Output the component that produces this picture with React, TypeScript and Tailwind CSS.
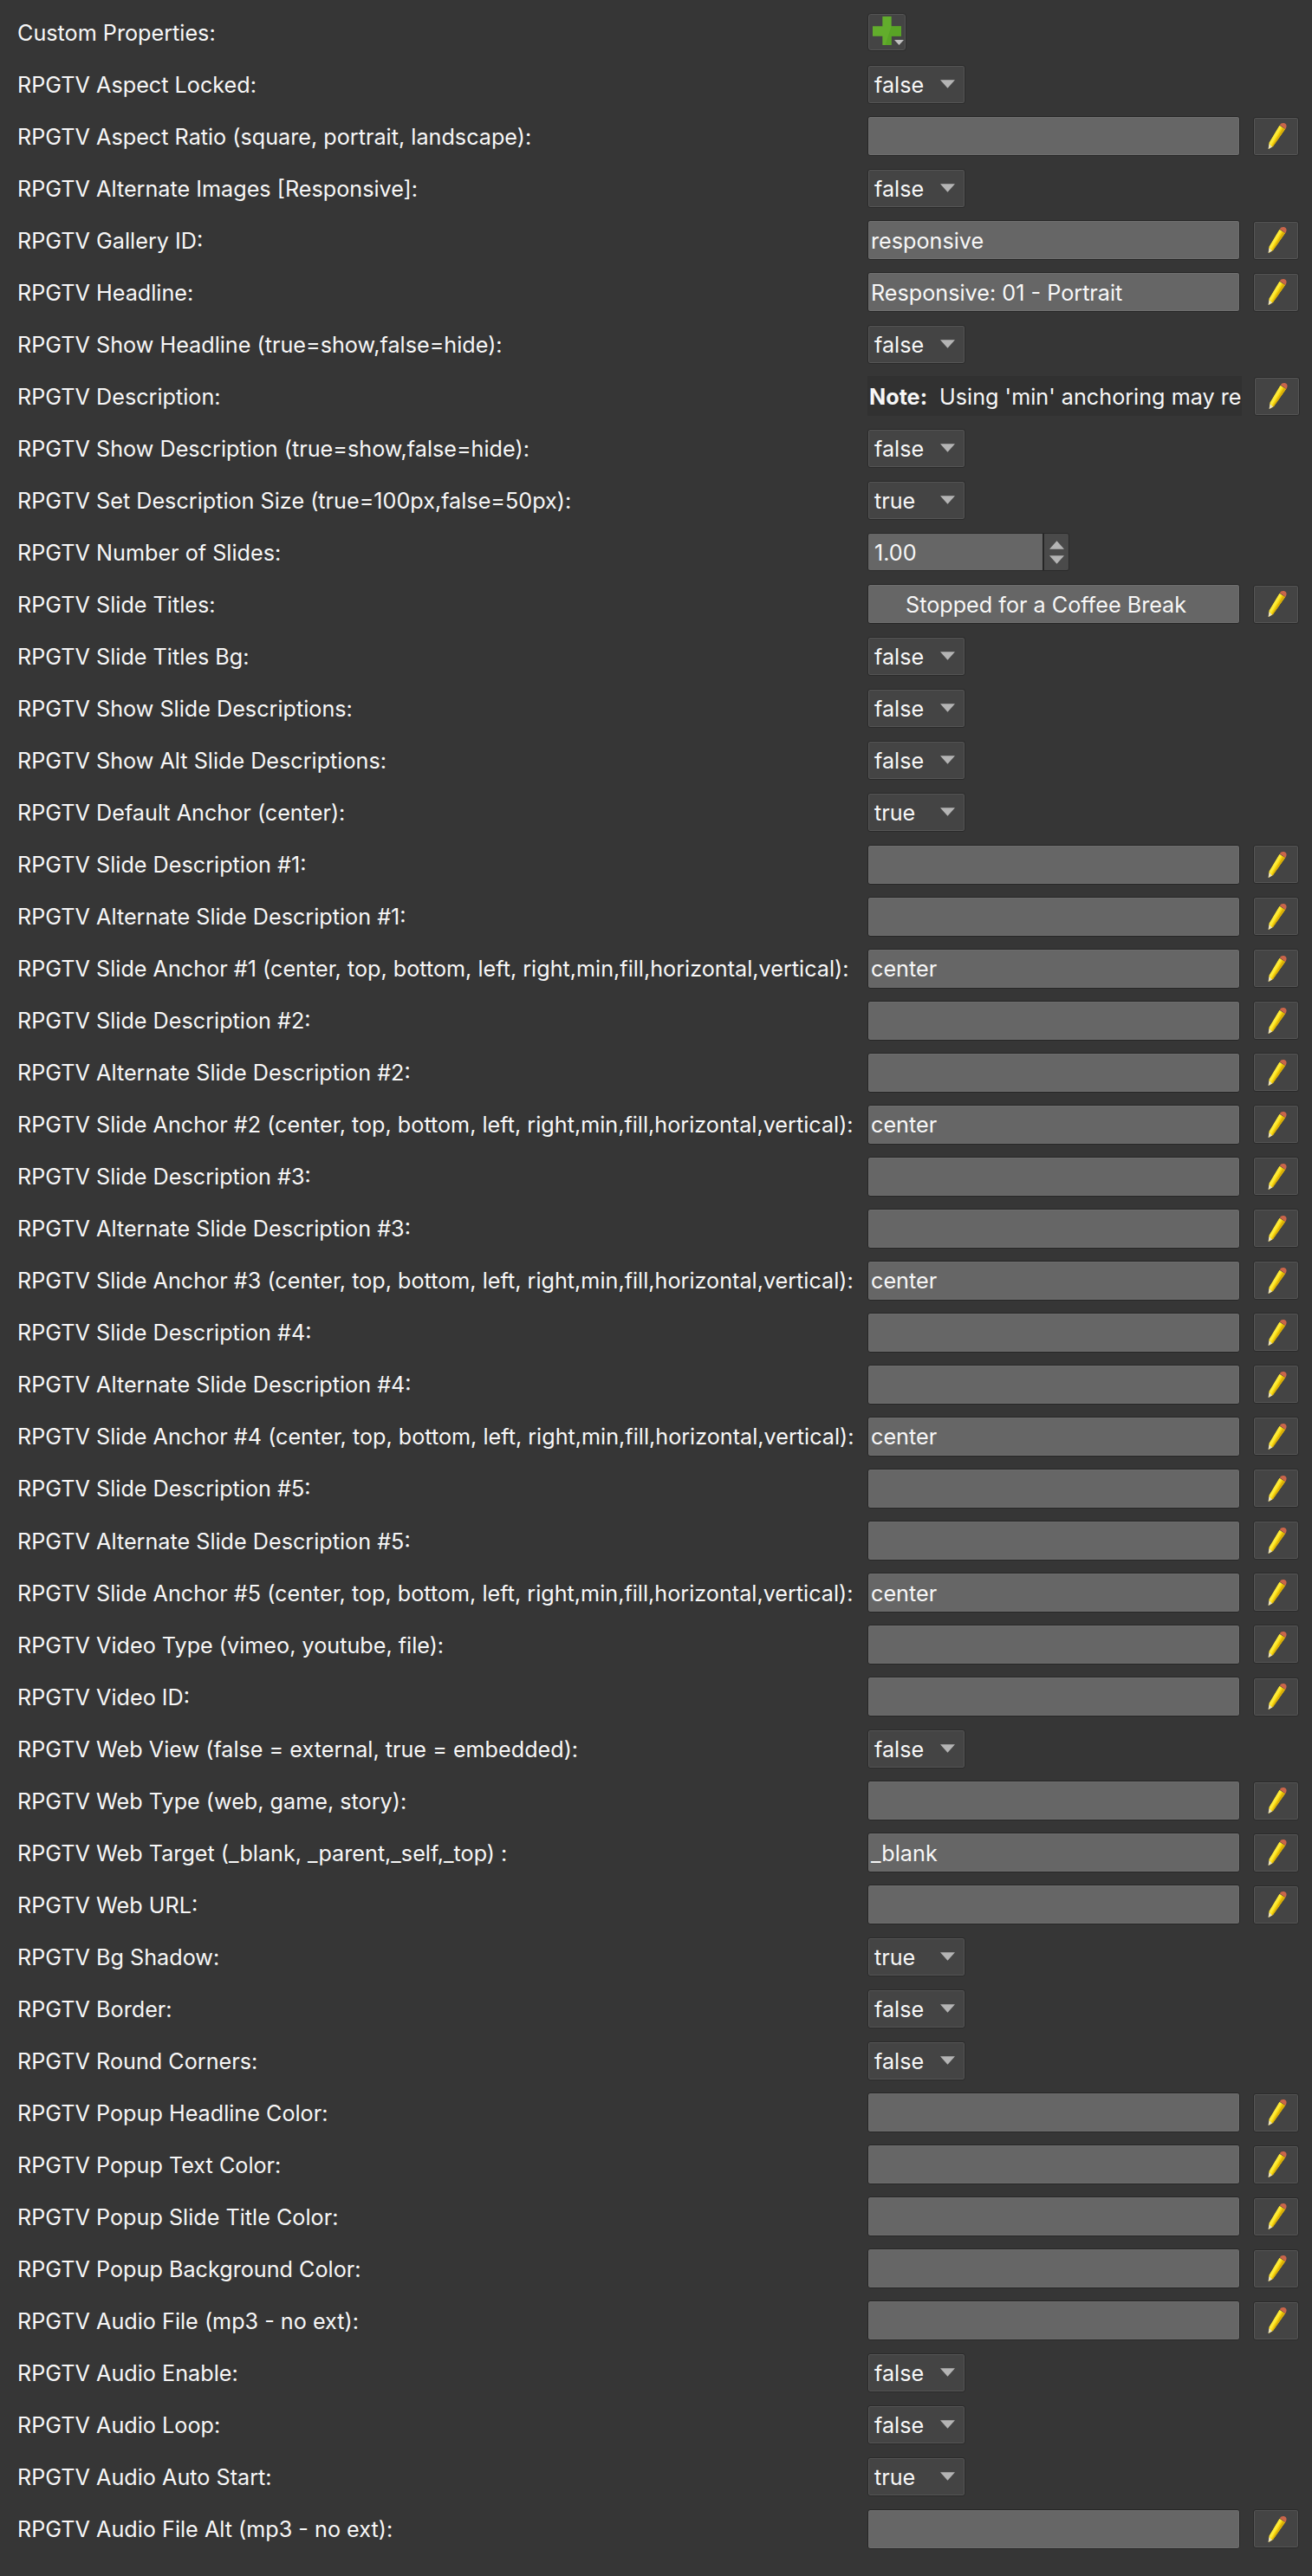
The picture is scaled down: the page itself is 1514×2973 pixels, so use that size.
type RowKind =
	| { kind: "add" }
	| { kind: "select"; value: string }
	| { kind: "text"; value?: string; centered?: boolean }
	| { kind: "note" }
	| { kind: "number"; value: string };

const anchor = "(center, top, bottom, left, right,min,fill,horizontal,vertical):";

const slideRows = (n: number): [string, RowKind][] => [
	[`RPGTV Slide Description #${n}:`, { kind: "text" }],
	[`RPGTV Alternate Slide Description #${n}:`, { kind: "text" }],
	[`RPGTV Slide Anchor #${n} ${anchor}`, { kind: "text", value: "center" }],
];

const rows: [string, RowKind][] = [
	["Custom Properties:", { kind: "add" }],
	["RPGTV Aspect Locked:", { kind: "select", value: "false" }],
	["RPGTV Aspect Ratio (square, portrait, landscape):", { kind: "text" }],
	["RPGTV Alternate Images [Responsive]:", { kind: "select", value: "false" }],
	["RPGTV Gallery ID:", { kind: "text", value: "responsive" }],
	["RPGTV Headline:", { kind: "text", value: "Responsive: 01 - Portrait" }],
	["RPGTV Show Headline (true=show,false=hide):", { kind: "select", value: "false" }],
	["RPGTV Description:", { kind: "note" }],
	["RPGTV Show Description (true=show,false=hide):", { kind: "select", value: "false" }],
	["RPGTV Set Description Size (true=100px,false=50px):", { kind: "select", value: "true" }],
	["RPGTV Number of Slides:", { kind: "number", value: "1.00" }],
	["RPGTV Slide Titles:", { kind: "text", value: "Stopped for a Coffee Break", centered: true }],
	["RPGTV Slide Titles Bg:", { kind: "select", value: "false" }],
	["RPGTV Show Slide Descriptions:", { kind: "select", value: "false" }],
	["RPGTV Show Alt Slide Descriptions:", { kind: "select", value: "false" }],
	["RPGTV Default Anchor (center):", { kind: "select", value: "true" }],
	...slideRows(1),
	...slideRows(2),
	...slideRows(3),
	...slideRows(4),
	...slideRows(5),
	["RPGTV Video Type (vimeo, youtube, file):", { kind: "text" }],
	["RPGTV Video ID:", { kind: "text" }],
	["RPGTV Web View (false = external, true = embedded):", { kind: "select", value: "false" }],
	["RPGTV Web Type (web, game, story):", { kind: "text" }],
	["RPGTV Web Target (_blank, _parent,_self,_top) :", { kind: "text", value: "_blank" }],
	["RPGTV Web URL:", { kind: "text" }],
	["RPGTV Bg Shadow:", { kind: "select", value: "true" }],
	["RPGTV Border:", { kind: "select", value: "false" }],
	["RPGTV Round Corners:", { kind: "select", value: "false" }],
	["RPGTV Popup Headline Color:", { kind: "text" }],
	["RPGTV Popup Text Color:", { kind: "text" }],
	["RPGTV Popup Slide Title Color:", { kind: "text" }],
	["RPGTV Popup Background Color:", { kind: "text" }],
	["RPGTV Audio File (mp3 - no ext):", { kind: "text" }],
	["RPGTV Audio Enable:", { kind: "select", value: "false" }],
	["RPGTV Audio Loop:", { kind: "select", value: "false" }],
	["RPGTV Audio Auto Start:", { kind: "select", value: "true" }],
	["RPGTV Audio File Alt (mp3 - no ext):", { kind: "text" }],
];

const Caret = ({ up = false }: { up?: boolean }) => (
	<svg width="17" height="10" viewBox="0 0 16 9" className="block">
		<polygon points={up ? "8,0 16,9 0,9" : "0,0 16,0 8,9"} fill="#b4b4b4" />
	</svg>
);

const Pencil = () => (
	<svg width="24" height="32" viewBox="0 0 24 32">
		{/* body */}
		<polygon points="15.5,4 22,8 8,28 3,31 3.5,24" fill="#f7d60f" />
		<polygon points="15.5,4 18,5.5 5.5,27 3.5,24" fill="#fdeb3a" />
		<polygon points="19.5,6.5 22,8 8,28 6.5,28.5" fill="#d9ae08" />
		{/* tip */}
		<polygon points="3.5,25 7,28.5 2.5,31" fill="#e8dfc0" />
		{/* eraser */}
		<path d="M16 3.5 C17 0.5 21 0.5 23 2.5 C24 4 23.5 6 22.5 8 Z" fill="#c9654a" />
	</svg>
);

const EditButton = () => (
	<div className="flex h-[45px] w-[53px] items-center justify-center rounded-[3px] border border-[#2a2a2a] bg-[#444444] shadow-[inset_0_0_0_1px_#555555]">
		<Pencil />
	</div>
);

const AddButton = () => (
	<div className="relative h-[44px] w-[45px] rounded-[4px] border border-[#2a2a2a] bg-[#444444] shadow-[inset_0_0_0_1px_#555555]">
		<svg width="33" height="33" viewBox="0 0 32 32" className="absolute top-[3px] left-[5px]">
			<path d="M11 0 H21 V11 H32 V22 H21 V32 H11 V22 H0 V11 H11 Z" fill="#62ad2c" />
			<path d="M21 0 V11 H32 V22 H21 V32 H14 L21 11 Z" fill="#55a024" opacity="0.7" />
		</svg>
		<svg width="11" height="6" viewBox="0 0 11 6" className="absolute right-[2px] bottom-[6px]">
			<polygon points="0,0 11,0 5.5,6" fill="#c0c0c0" />
		</svg>
	</div>
);

const SelectBox = ({ value }: { value: string }) => (
	<div className="flex h-[45px] w-[113px] items-center justify-between rounded-[3px] border border-[#2a2a2a] bg-[#444444] pr-[11px] pl-[7px] shadow-[inset_0_0_0_1px_#555555]">
		<span className="pt-[3px]">{value}</span>
		<Caret />
	</div>
);

const TextBox = ({ value, centered }: { value?: string; centered?: boolean }) => (
	<div
		className={`flex h-[46px] w-[430px] items-center rounded-[3px] border border-[#262626] bg-[#666666] shadow-[inset_0_0_0_1px_#6e6e6e] ${
			centered ? "pl-[43px]" : "pl-[3px]"
		}`}
	>
		<span className="pt-[3px]">{value}</span>
	</div>
);

const NoteBox = () => (
	<div className="flex h-[46px] w-[432px] items-center overflow-hidden whitespace-nowrap bg-[#313131] pt-[3px] pl-[2px]">
		<b className="font-bold">Note:</b>
		<span className="ml-[14px]">Using 'min' anchoring may re</span>
	</div>
);

const NumberBox = ({ value }: { value: string }) => (
	<div className="flex h-[44px] w-[233px] overflow-hidden rounded-[3px] border border-[#2a2a2a]">
		<div className="flex flex-1 items-center border-r-2 border-[#262626] bg-[#666666] pt-[3px] pl-[7px]">{value}</div>
		<div className="flex w-[28px] flex-col items-center justify-center gap-[7px] bg-[#4a4a4a]">
			<Caret up />
			<Caret />
		</div>
	</div>
);

const Control = ({ row }: { row: RowKind }) => {
	switch (row.kind) {
		case "add":
			return <AddButton />;
		case "select":
			return <SelectBox value={row.value} />;
		case "number":
			return <NumberBox value={row.value} />;
		case "note":
			return (
				<div className="flex items-center gap-[14px]">
					<NoteBox />
					<EditButton />
				</div>
			);
		default:
			return (
				<div className="flex items-center gap-[15px]">
					<TextBox value={row.value} centered={row.centered} />
					<EditButton />
				</div>
			);
	}
};

const App = () => {
	return (
		<div className="h-[2973px] w-[1514px] overflow-hidden bg-[#363636] pt-[7px] font-['Inter',sans-serif] text-[25.2px] text-[#f7f7f7]">
			{rows.map(([label, row]) => (
				<div key={label} className="flex h-[60.04px] items-center pl-[20px]">
					<div className="w-[981px] shrink-0 whitespace-nowrap pt-[3px]">{label}</div>
					<Control row={row} />
				</div>
			))}
		</div>
	);
};

export default App;
